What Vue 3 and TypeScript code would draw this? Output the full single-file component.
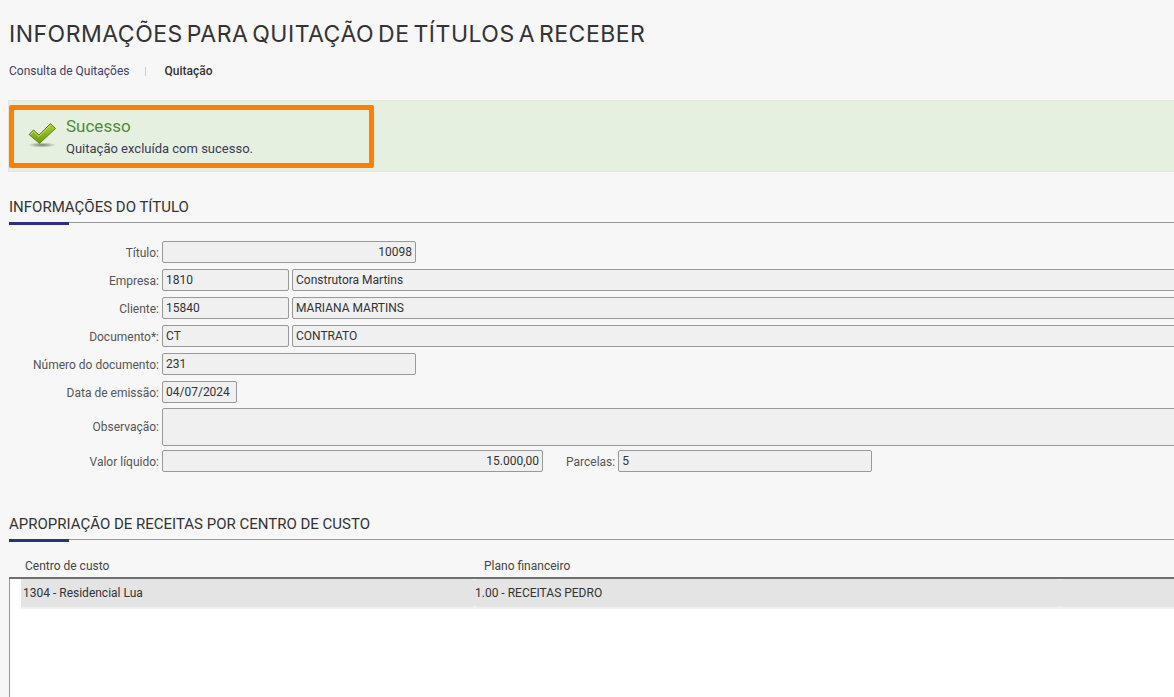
<script setup lang="ts">
interface Col { code: string; name?: string; label: string }
const lookups: Col[] = [
  { label: 'Empresa:', code: '1810', name: 'Construtora Martins' },
  { label: 'Cliente:', code: '15840', name: 'MARIANA MARTINS' },
  { label: 'Documento*:', code: 'CT', name: 'CONTRATO' },
]
</script>

<template>
  <div class="page">
    <h1 class="title">INFORMAÇÕES PARA QUITAÇÃO DE TÍTULOS A RECEBER</h1>
    <nav class="crumbs">
      <span class="crumb">Consulta de Quitações</span>
      <span class="sep"></span>
      <span class="crumb current">Quitação</span>
    </nav>

    <div class="alert">
      <div class="alert-box">
        <svg class="check" width="32" height="28" viewBox="0 0 32 28" aria-hidden="true">
          <defs>
            <linearGradient id="chk" x1="0" y1="0" x2="0" y2="1">
              <stop offset="0" stop-color="#a9cf3c" />
              <stop offset="1" stop-color="#6c9a12" />
            </linearGradient>
            <radialGradient id="shd">
              <stop offset="0" stop-color="#5d6458" stop-opacity="0.8" />
              <stop offset="1" stop-color="#5d6458" stop-opacity="0" />
            </radialGradient>
          </defs>
          <ellipse cx="15" cy="24" rx="14" ry="2.6" fill="url(#shd)" />
          <path d="M2 13.5 L6.5 9 L12 14 L23.5 2.5 L28.5 7.5 L12.5 22.5 Z" fill="url(#chk)" stroke="#5f8a10" stroke-width="1" stroke-linejoin="round" />
          <path d="M3.5 13.5 L6.5 10.5 L12 15.5 L23.5 4" fill="none" stroke="#c9e36d" stroke-width="1" />
        </svg>
        <div class="alert-text">
          <div class="alert-title">Sucesso</div>
          <div class="alert-msg">Quitação excluída com sucesso.</div>
        </div>
      </div>
    </div>

    <section class="section first">
      <h2 class="section-title">INFORMAÇÕES DO TÍTULO</h2>
    </section>

    <div class="form">
      <div class="row">
        <label class="label">Título:</label>
        <div class="field num w254">10098</div>
      </div>
      <div v-for="l in lookups" :key="l.label" class="row">
        <label class="label">{{ l.label }}</label>
        <div class="field w127">{{ l.code }}</div>
        <div class="field grow">{{ l.name }}</div>
      </div>
      <div class="row">
        <label class="label">Número do documento:</label>
        <div class="field w254">231</div>
      </div>
      <div class="row">
        <label class="label">Data de emissão:</label>
        <div class="field date">04/07/2024</div>
      </div>
      <div class="row obs">
        <label class="label">Observação:</label>
        <div class="field grow tall"></div>
      </div>
      <div class="row last">
        <label class="label">Valor líquido:</label>
        <div class="field num w381">15.000,00</div>
        <label class="label small">Parcelas:</label>
        <div class="field w254">5</div>
      </div>
    </div>

    <section class="section second">
      <h2 class="section-title">APROPRIAÇÃO DE RECEITAS POR CENTRO DE CUSTO</h2>
    </section>

    <div class="grid-head">
      <span class="h1">Centro de custo</span>
      <span class="h2">Plano financeiro</span>
    </div>
    <div class="grid-body">
      <div class="grid-row">
        <span class="c1">1304 - Residencial Lua</span>
        <span class="c2">1.00 - RECEITAS PEDRO</span>
        <i class="tick t1 top"></i>
        <i class="tick t1 bottom"></i>
        <i class="tick t2 top"></i>
        <i class="tick t2 bottom"></i>
      </div>
    </div>
  </div>
</template>

<style>
html, body { margin: 0; background: #f7f7f7; overflow: hidden; }
</style>

<style scoped>
.page {
  width: 1174px;
  height: 697px;
  overflow: hidden;
  box-sizing: border-box;
  padding-left: 9px;
  background: #f7f7f7;
  font-family: Roboto, "Liberation Sans", sans-serif;
  font-size: 12px;
  color: #333;
}
.title {
  margin: 0;
  padding-top: 20px;
  height: 28px;
  line-height: 28px;
  font-family: Inter, Roboto, sans-serif;
  font-size: 23px;
  letter-spacing: 0.5px;
  word-spacing: -3px;
  font-weight: 400;
  color: #333;
  white-space: nowrap;
}
.crumbs {
  display: flex;
  align-items: center;
  height: 16px;
  margin-top: 15px;
}
.crumb { color: #3f3f66; line-height: 16px; }
.sep { width: 1px; height: 9px; background: #ccc; margin: 0 18px 0 16px; }
.current { color: #333; font-weight: 500; }
.alert {
  margin: 21px 0 0 -1px;
  height: 72px;
  box-sizing: border-box;
  border: 1px solid #e2e7de;
  border-right: 0;
  background: #e5f0e0;
  padding: 4px 0 0 0;
}
.alert-box {
  width: 365px;
  height: 63px;
  box-sizing: border-box;
  border: 5px solid #ff8000;
  border-radius: 2px;
  display: flex;
}
.check { margin: 11px 0 0 13px; flex: none; }
.alert-text { margin-left: 7px; }
.alert-title {
  margin-top: 6px;
  font-size: 17px;
  line-height: 20px;
  color: #4f8a3a;
}
.alert-msg {
  margin-top: 5px;
  font-size: 13px;
  line-height: 16px;
  color: #3a3a55;
}
.section {
  position: relative;
  height: 25px;
  border-bottom: 1px solid #999;
}
.section::after {
  content: "";
  position: absolute;
  left: 0;
  bottom: -3px;
  width: 60px;
  height: 3px;
  background: #2b3087;
}
.section.first { margin-top: 25px; }
.section.second { margin-top: 42px; }
.section-title {
  margin: 0;
  font-size: 15px;
  font-weight: 400;
  line-height: 20px;
  color: #333;
  white-space: nowrap;
}
.form {
  width: 1200px;
  margin-top: 18px;
}
.row {
  display: flex;
  align-items: center;
  height: 22px;
  margin-bottom: 6px;
}
.row.obs { height: 38px; margin-top: -1px; margin-bottom: 4px; }
.row.obs .label { margin-top: 0; }
.row.last { margin-bottom: 0; }
.label {
  width: 150px;
  flex: none;
  text-align: right;
  margin: 2px 3px 0 0;
  color: #555;
  white-space: nowrap;
}
.label.small { width: auto; margin-left: 23px; }
.field {
  box-sizing: border-box;
  height: 22px;
  line-height: 20px;
  border: 1px solid #999;
  border-radius: 2px;
  background: #f0f0f0;
  padding: 0 3px;
  color: #333;
  flex: none;
  white-space: nowrap;
}
.field + .field { margin-left: 3px; }
.num { text-align: right; }
.w254 { width: 254px; }
.w127 { width: 127px; }
.w381 { width: 381px; }
.date { width: 75px; }
.grow { flex: 1; }
.tall { height: 38px; }
.grid-head {
  height: 26px;
  margin-top: 13px;
  position: relative;
  border-bottom: 2px solid #6f6f6f;
  box-sizing: border-box;
}
.grid-head span { position: absolute; top: 5px; line-height: 16px; color: #444; }
.h1 { left: 16px; }
.h2 { left: 475px; }
.grid-body {
  height: 200px;
  background: #fff;
  border-left: 1px solid #999;
  box-sizing: border-box;
}
.grid-row {
  position: relative;
  height: 30px;
  box-sizing: border-box;
  border-bottom: 2px solid #f0f0f0;
  background: #e4e4e4;
  margin-left: 11px;
}
.grid-row span { position: absolute; top: 6px; line-height: 16px; color: #333; white-space: nowrap; }
.c1 { left: 2px; }
.c2 { left: 454px; }
.tick {
  position: absolute;
  width: 3px;
  height: 1px;
  background: repeating-linear-gradient(90deg, #f7f7f7 0 1px, transparent 1px 2px);
}
.tick.top { top: 0; }
.tick.bottom { bottom: 0; }
.tick.t1 { left: 452px; }
.tick.t2 { left: 1038px; }
</style>
